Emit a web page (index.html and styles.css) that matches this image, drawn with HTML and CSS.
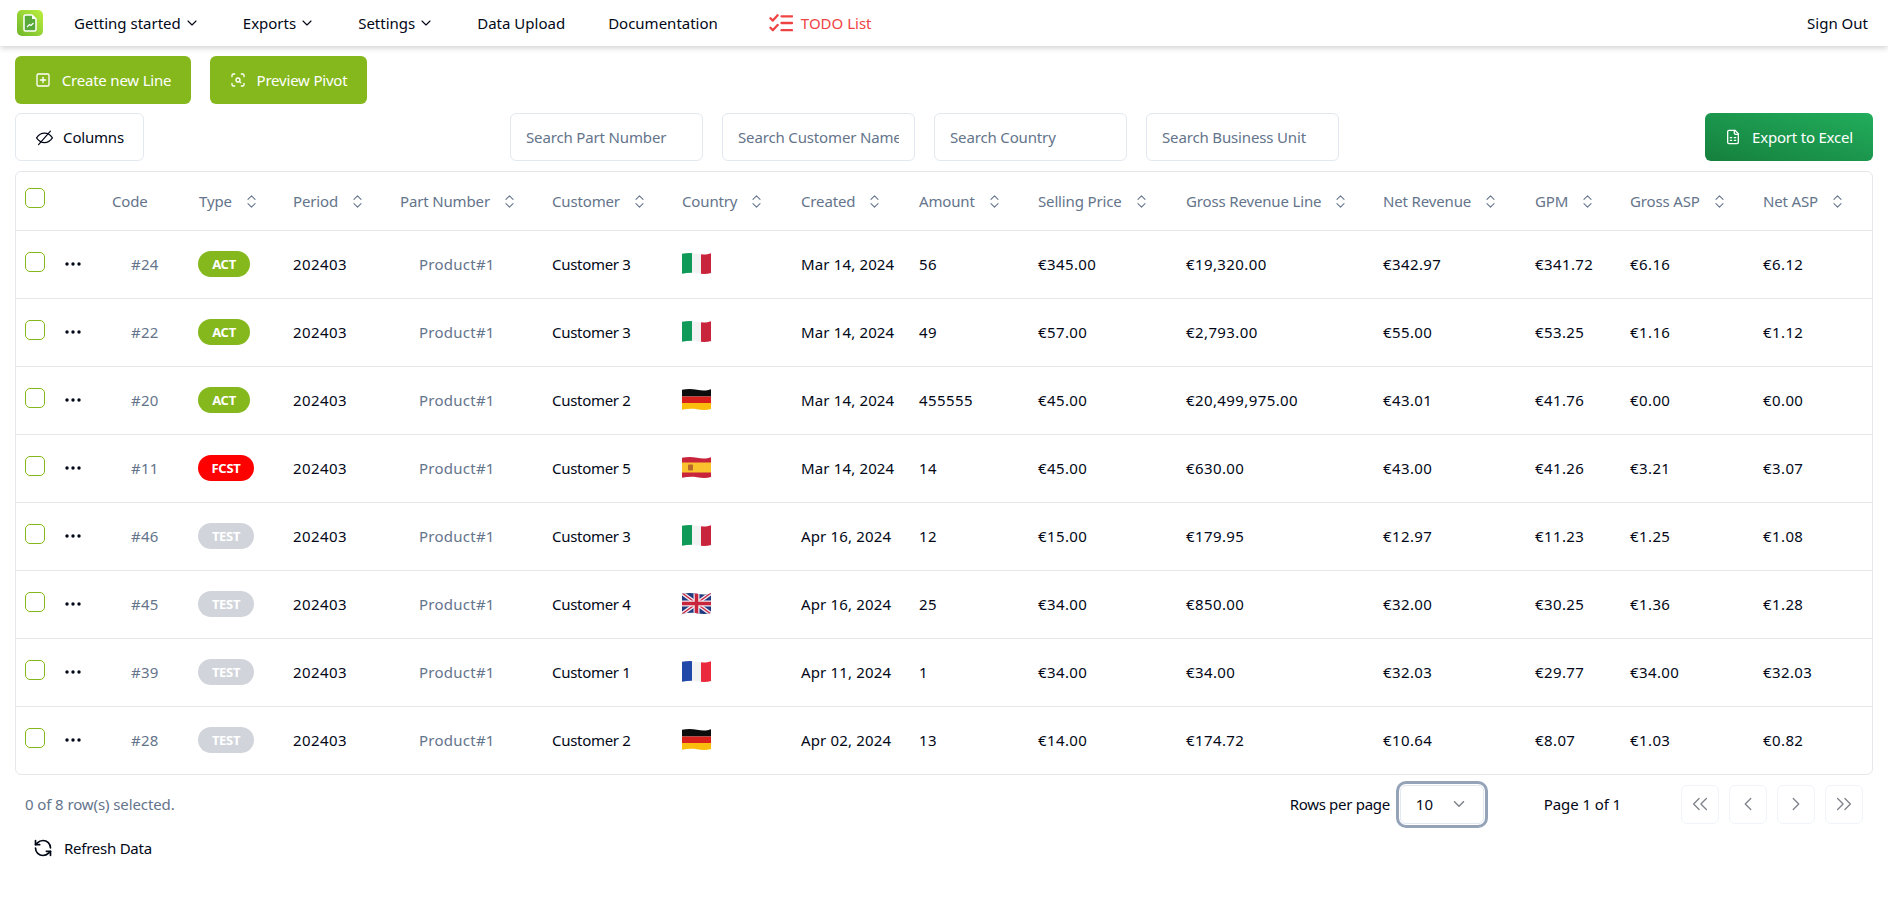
FILE: index.html
```html
<!DOCTYPE html>
<html lang="en">
<head>
    <meta charset="UTF-8">
    <title>Sales Lines</title>
    <link rel="stylesheet" href="styles.css">
</head>
<body>
    <svg class="sprite" width="0" height="0">
        <defs>
            <linearGradient id="logo-grad" x1="1" y1="0" x2="0" y2="1">
                <stop offset="0" stop-color="#bdf03f"/>
                <stop offset="1" stop-color="#6fb62a"/>
            </linearGradient>
            <clipPath id="wave"><path d="M0 .8C5 -.2 10 -.2 15 .8s10 1 14 -.5V20c-4 1.200-9 1.200-14 .2S5 19.800 0 20.800z"/></clipPath>
        </defs>
        <symbol id="i-down" viewBox="0 0 24 24"><path d="m6 9 6 6 6-6"/></symbol>
        <symbol id="i-sort" viewBox="0 0 24 24"><path d="m7 15 5 5 5-5"/><path d="m7 9 5-5 5 5"/></symbol>
        <symbol id="i-plus" viewBox="0 0 24 24"><rect x="3" y="3" width="18" height="18" rx="2"/><path d="M8 12h8"/><path d="M12 8v8"/></symbol>
        <symbol id="i-scan" viewBox="0 0 24 24"><path d="M3 7V5a2 2 0 0 1 2-2h2"/><path d="M17 3h2a2 2 0 0 1 2 2v2"/><path d="M21 17v2a2 2 0 0 1-2 2h-2"/><path d="M7 21H5a2 2 0 0 1-2-2v-2"/><circle cx="12" cy="12" r="3"/><path d="m16 16-1.9-1.9"/></symbol>
        <symbol id="i-eye" viewBox="0 0 24 24"><path d="M2 12.500s4-6 10-6 10 6 10 6-4 6-10 6-10-6-10-6z"/><path d="M4.500 21 19.500 4"/></symbol>
        <symbol id="i-sheet" viewBox="0 0 24 24"><path d="M15 2H6a2 2 0 0 0-2 2v16a2 2 0 0 0 2 2h12a2 2 0 0 0 2-2V7Z"/><path d="M14 2v4a2 2 0 0 0 2 2h4"/><path d="M8 13h2"/><path d="M14 13h2"/><path d="M8 17h2"/><path d="M14 17h2"/></symbol>
        <symbol id="i-todo" viewBox="0 0 25 20"><path d="m1.500 5 2.500 2.500 5-5.500"/><path d="m1.500 15 2.500 2.500 5-5.500"/><path d="M13 3h11"/><path d="M13 10h11"/><path d="M13 17.500h11"/></symbol>
        <symbol id="i-refresh" viewBox="0 0 24 24"><path d="M21 12a9 9 0 0 0-9-9 9.750 9.750 0 0 0-6.740 2.740L3 8"/><path d="M3 3v5h5"/><path d="M3 12a9 9 0 0 0 9 9 9.750 9.750 0 0 0 6.740-2.740L21 16"/><path d="M16 16h5v5"/></symbol>
        <symbol id="i-first" viewBox="0 0 24 24"><path d="m11 18-6-6 6-6"/><path d="m19 18-6-6 6-6"/></symbol>
        <symbol id="i-prev" viewBox="0 0 24 24"><path d="m15 18-6-6 6-6"/></symbol>
        <symbol id="i-next" viewBox="0 0 24 24"><path d="m9 18 6-6-6-6"/></symbol>
        <symbol id="i-last" viewBox="0 0 24 24"><path d="m5 18 6-6-6-6"/><path d="m13 18 6-6-6-6"/></symbol>

        <!-- flags: stripes cut by a waving outline -->
        <symbol id="f-it" viewBox="0 0 29 21"><g clip-path="url(#wave)"><rect width="10" height="21" fill="#109a5a"/><rect x="10" width="9" height="21" fill="#f2f2f2"/><rect x="19" width="10" height="21" fill="#c8243c"/></g></symbol>
        <symbol id="f-fr" viewBox="0 0 29 21"><g clip-path="url(#wave)"><rect width="10" height="21" fill="#1f48a8"/><rect x="10" width="9" height="21" fill="#f2f2f2"/><rect x="19" width="10" height="21" fill="#ea2a3c"/></g></symbol>
        <symbol id="f-de" viewBox="0 0 29 21"><g clip-path="url(#wave)"><rect width="29" height="7.500" fill="#0c0c0c"/><rect y="7.500" width="29" height="6.500" fill="#d8201c"/><rect y="14" width="29" height="7" fill="#fbbe0c"/></g></symbol>
        <symbol id="f-es" viewBox="0 0 29 21"><g clip-path="url(#wave)"><rect width="29" height="21" fill="#c8243c"/><rect y="5.500" width="29" height="10" fill="#fac22c"/><rect x="6" y="7.500" width="5" height="6" rx="1" fill="#b8662a"/></g></symbol>
        <symbol id="f-gb" viewBox="0 0 29 21"><g clip-path="url(#wave)"><rect width="29" height="21" fill="#1f3a80"/><path d="M0 0 29 21M29 0 0 21" stroke="#f2e8ee" stroke-width="4"/><path d="M0 0 29 21M29 0 0 21" stroke="#c8243c" stroke-width="1.300"/><path d="M14.500 0v21M0 10.500h29" stroke="#f2e8ee" stroke-width="6"/><path d="M14.500 0v21M0 10.500h29" stroke="#c8243c" stroke-width="3.500"/></g></symbol>
    </svg>

    <header class="topbar">
        <svg class="logo" viewBox="0 0 26 26">
            <rect width="26" height="26" rx="5" fill="url(#logo-grad)"/>
            <path d="M7 6.500a1.500 1.500 0 0 1 1.500-1.500H15l4 4v10.500a1.500 1.500 0 0 1-1.500 1.500h-9A1.500 1.500 0 0 1 7 19.500z" fill="#58a83a" stroke="#fff" stroke-width="1.500"/>
            <path d="M15 5v4h4z" fill="#fff"/>
            <path d="m10 17 2.500-2.500 1.500 1 2.500-2.500" fill="none" stroke="#fff" stroke-width="1.200"/>
        </svg>
        <nav class="nav">
            <a class="nav-item">Getting started <svg class="ico-down"><use href="#i-down"/></svg></a>
            <a class="nav-item">Exports <svg class="ico-down"><use href="#i-down"/></svg></a>
            <a class="nav-item">Settings <svg class="ico-down"><use href="#i-down"/></svg></a>
            <a class="nav-item">Data Upload</a>
            <a class="nav-item">Documentation</a>
            <a class="nav-item todo"><svg class="ico-todo"><use href="#i-todo"/></svg>TODO List</a>
        </nav>
        <a class="signout">Sign Out</a>
    </header>

    <main class="content">
        <div class="actions">
            <button class="btn btn-green create"><svg class="ico"><use href="#i-plus"/></svg>Create new Line</button>
            <button class="btn btn-green pivot"><svg class="ico"><use href="#i-scan"/></svg>Preview Pivot</button>
        </div>

        <div class="filters">
            <button class="btn btn-outline"><svg class="ico-eye"><use href="#i-eye"/></svg>Columns</button>
            <div class="searches">
                <input class="search" placeholder="Search Part Number">
                <input class="search" placeholder="Search Customer Name">
                <input class="search" placeholder="Search Country">
                <input class="search" placeholder="Search Business Unit">
            </div>
            <button class="btn btn-excel"><svg class="ico"><use href="#i-sheet"/></svg>Export to Excel</button>
        </div>

        <div class="table-wrap">
            <table class="grid">
                <colgroup>
                    <col class="c-sel"><col class="c-act"><col class="c-code"><col class="c-type"><col class="c-period"><col class="c-part"><col class="c-cust"><col class="c-country"><col class="c-created"><col class="c-amount"><col class="c-price"><col class="c-gross"><col class="c-net"><col class="c-gpm"><col class="c-gasp"><col class="c-nasp">
                </colgroup>
                <thead>
                    <tr>
                        <th class="sel"><span class="check"></span></th>
                        <th></th>
                        <th>Code</th>
                        <th>Type<svg class="ico-sort"><use href="#i-sort"/></svg></th>
                        <th>Period<svg class="ico-sort"><use href="#i-sort"/></svg></th>
                        <th>Part Number<svg class="ico-sort"><use href="#i-sort"/></svg></th>
                        <th>Customer<svg class="ico-sort"><use href="#i-sort"/></svg></th>
                        <th>Country<svg class="ico-sort"><use href="#i-sort"/></svg></th>
                        <th>Created<svg class="ico-sort"><use href="#i-sort"/></svg></th>
                        <th>Amount<svg class="ico-sort"><use href="#i-sort"/></svg></th>
                        <th>Selling Price<svg class="ico-sort"><use href="#i-sort"/></svg></th>
                        <th>Gross Revenue Line<svg class="ico-sort"><use href="#i-sort"/></svg></th>
                        <th>Net Revenue<svg class="ico-sort"><use href="#i-sort"/></svg></th>
                        <th>GPM<svg class="ico-sort"><use href="#i-sort"/></svg></th>
                        <th>Gross ASP<svg class="ico-sort"><use href="#i-sort"/></svg></th>
                        <th>Net ASP<svg class="ico-sort"><use href="#i-sort"/></svg></th>
                    </tr>
                </thead>
                <tbody>
                    <tr>
                        <td class="sel"><span class="check"></span></td>
                        <td><svg class="dots" viewBox="0 0 16 4"><circle cx="2" cy="2" r="1.700"/><circle cx="8" cy="2" r="1.700"/><circle cx="14" cy="2" r="1.700"/></svg></td>
                        <td class="code">#24</td>
                        <td><span class="badge act">ACT</span></td>
                        <td class="num">202403</td>
                        <td class="part">Product#1</td>
                        <td class="cust">Customer 3</td>
                        <td><svg class="flag"><use href="#f-it"/></svg></td>
                        <td class="date">Mar 14, 2024</td>
                        <td class="num">56</td>
                        <td class="num">€345.00</td>
                        <td class="num">€19,320.00</td>
                        <td class="num">€342.97</td>
                        <td class="num">€341.72</td>
                        <td class="num">€6.16</td>
                        <td class="num">€6.12</td>
                    </tr>
                    <tr>
                        <td class="sel"><span class="check"></span></td>
                        <td><svg class="dots" viewBox="0 0 16 4"><circle cx="2" cy="2" r="1.700"/><circle cx="8" cy="2" r="1.700"/><circle cx="14" cy="2" r="1.700"/></svg></td>
                        <td class="code">#22</td>
                        <td><span class="badge act">ACT</span></td>
                        <td class="num">202403</td>
                        <td class="part">Product#1</td>
                        <td class="cust">Customer 3</td>
                        <td><svg class="flag"><use href="#f-it"/></svg></td>
                        <td class="date">Mar 14, 2024</td>
                        <td class="num">49</td>
                        <td class="num">€57.00</td>
                        <td class="num">€2,793.00</td>
                        <td class="num">€55.00</td>
                        <td class="num">€53.25</td>
                        <td class="num">€1.16</td>
                        <td class="num">€1.12</td>
                    </tr>
                    <tr>
                        <td class="sel"><span class="check"></span></td>
                        <td><svg class="dots" viewBox="0 0 16 4"><circle cx="2" cy="2" r="1.700"/><circle cx="8" cy="2" r="1.700"/><circle cx="14" cy="2" r="1.700"/></svg></td>
                        <td class="code">#20</td>
                        <td><span class="badge act">ACT</span></td>
                        <td class="num">202403</td>
                        <td class="part">Product#1</td>
                        <td class="cust">Customer 2</td>
                        <td><svg class="flag"><use href="#f-de"/></svg></td>
                        <td class="date">Mar 14, 2024</td>
                        <td class="num">455555</td>
                        <td class="num">€45.00</td>
                        <td class="num">€20,499,975.00</td>
                        <td class="num">€43.01</td>
                        <td class="num">€41.76</td>
                        <td class="num">€0.00</td>
                        <td class="num">€0.00</td>
                    </tr>
                    <tr>
                        <td class="sel"><span class="check"></span></td>
                        <td><svg class="dots" viewBox="0 0 16 4"><circle cx="2" cy="2" r="1.700"/><circle cx="8" cy="2" r="1.700"/><circle cx="14" cy="2" r="1.700"/></svg></td>
                        <td class="code">#11</td>
                        <td><span class="badge fcst">FCST</span></td>
                        <td class="num">202403</td>
                        <td class="part">Product#1</td>
                        <td class="cust">Customer 5</td>
                        <td><svg class="flag"><use href="#f-es"/></svg></td>
                        <td class="date">Mar 14, 2024</td>
                        <td class="num">14</td>
                        <td class="num">€45.00</td>
                        <td class="num">€630.00</td>
                        <td class="num">€43.00</td>
                        <td class="num">€41.26</td>
                        <td class="num">€3.21</td>
                        <td class="num">€3.07</td>
                    </tr>
                    <tr>
                        <td class="sel"><span class="check"></span></td>
                        <td><svg class="dots" viewBox="0 0 16 4"><circle cx="2" cy="2" r="1.700"/><circle cx="8" cy="2" r="1.700"/><circle cx="14" cy="2" r="1.700"/></svg></td>
                        <td class="code">#46</td>
                        <td><span class="badge test">TEST</span></td>
                        <td class="num">202403</td>
                        <td class="part">Product#1</td>
                        <td class="cust">Customer 3</td>
                        <td><svg class="flag"><use href="#f-it"/></svg></td>
                        <td class="date">Apr 16, 2024</td>
                        <td class="num">12</td>
                        <td class="num">€15.00</td>
                        <td class="num">€179.95</td>
                        <td class="num">€12.97</td>
                        <td class="num">€11.23</td>
                        <td class="num">€1.25</td>
                        <td class="num">€1.08</td>
                    </tr>
                    <tr>
                        <td class="sel"><span class="check"></span></td>
                        <td><svg class="dots" viewBox="0 0 16 4"><circle cx="2" cy="2" r="1.700"/><circle cx="8" cy="2" r="1.700"/><circle cx="14" cy="2" r="1.700"/></svg></td>
                        <td class="code">#45</td>
                        <td><span class="badge test">TEST</span></td>
                        <td class="num">202403</td>
                        <td class="part">Product#1</td>
                        <td class="cust">Customer 4</td>
                        <td><svg class="flag"><use href="#f-gb"/></svg></td>
                        <td class="date">Apr 16, 2024</td>
                        <td class="num">25</td>
                        <td class="num">€34.00</td>
                        <td class="num">€850.00</td>
                        <td class="num">€32.00</td>
                        <td class="num">€30.25</td>
                        <td class="num">€1.36</td>
                        <td class="num">€1.28</td>
                    </tr>
                    <tr>
                        <td class="sel"><span class="check"></span></td>
                        <td><svg class="dots" viewBox="0 0 16 4"><circle cx="2" cy="2" r="1.700"/><circle cx="8" cy="2" r="1.700"/><circle cx="14" cy="2" r="1.700"/></svg></td>
                        <td class="code">#39</td>
                        <td><span class="badge test">TEST</span></td>
                        <td class="num">202403</td>
                        <td class="part">Product#1</td>
                        <td class="cust">Customer 1</td>
                        <td><svg class="flag"><use href="#f-fr"/></svg></td>
                        <td class="date">Apr 11, 2024</td>
                        <td class="num">1</td>
                        <td class="num">€34.00</td>
                        <td class="num">€34.00</td>
                        <td class="num">€32.03</td>
                        <td class="num">€29.77</td>
                        <td class="num">€34.00</td>
                        <td class="num">€32.03</td>
                    </tr>
                    <tr>
                        <td class="sel"><span class="check"></span></td>
                        <td><svg class="dots" viewBox="0 0 16 4"><circle cx="2" cy="2" r="1.700"/><circle cx="8" cy="2" r="1.700"/><circle cx="14" cy="2" r="1.700"/></svg></td>
                        <td class="code">#28</td>
                        <td><span class="badge test">TEST</span></td>
                        <td class="num">202403</td>
                        <td class="part">Product#1</td>
                        <td class="cust">Customer 2</td>
                        <td><svg class="flag"><use href="#f-de"/></svg></td>
                        <td class="date">Apr 02, 2024</td>
                        <td class="num">13</td>
                        <td class="num">€14.00</td>
                        <td class="num">€174.72</td>
                        <td class="num">€10.64</td>
                        <td class="num">€8.07</td>
                        <td class="num">€1.03</td>
                        <td class="num">€0.82</td>
                    </tr>
                </tbody>
            </table>
        </div>

        <div class="pager-row">
            <span class="selected">0 of 8 row(s) selected.</span>
            <div class="pager">
                <span class="rows-label">Rows per page</span>
                <div class="rows-select">10<svg class="ico-select"><use href="#i-down"/></svg></div>
                <span class="page-label">Page 1 of 1</span>
                <div class="page-btns">
                    <button class="page-btn"><svg class="ico-page"><use href="#i-first"/></svg></button>
                    <button class="page-btn"><svg class="ico-page"><use href="#i-prev"/></svg></button>
                    <button class="page-btn"><svg class="ico-page"><use href="#i-next"/></svg></button>
                    <button class="page-btn"><svg class="ico-page"><use href="#i-last"/></svg></button>
                </div>
            </div>
        </div>

        <a class="refresh"><svg class="ico-refresh"><use href="#i-refresh"/></svg>Refresh Data</a>
    </main>
</body>
</html>
```

FILE: styles.css
```css
* {
    box-sizing: border-box;
}

body {
    margin: 0;
    font-family: "Noto Sans", sans-serif;
    font-size: 15px;
    color: #020817;
    background: #fff;
}

.sprite {
    position: absolute;
}

svg use {
    fill: none;
    stroke: currentColor;
    stroke-width: 2;
    stroke-linecap: round;
    stroke-linejoin: round;
}

/* top bar */
.topbar {
    display: flex;
    align-items: center;
    height: 46px;
    padding: 0 20px 0 17px;
    box-shadow: 0 2px 6px rgba(0, 0, 0, 0.18);
}

.logo {
    width: 26px;
    height: 26px;
    margin-right: 31px;
}

.nav {
    display: flex;
    align-items: center;
    gap: 43px;
}

.nav-item {
    display: flex;
    align-items: center;
    gap: 3px;
}

.ico-down {
    width: 16px;
    height: 16px;
}

.ico-down use {
    stroke-width: 1.700;
}

.todo {
    color: #ef4444;
    margin-left: 8px;
    gap: 8px;
}

.ico-todo {
    width: 24px;
    height: 20px;
}

.ico-todo use {
    stroke-width: 2.400;
}

.signout {
    margin-left: auto;
}

/* toolbars */
.content {
    padding: 10px 15px 0;
}

.actions {
    display: flex;
    gap: 19px;
}

.btn {
    display: flex;
    align-items: center;
    justify-content: center;
    height: 48px;
    border: none;
    border-radius: 6px;
    font-family: inherit;
    font-size: 15px;
    letter-spacing: -0.2px;
}

.btn-green {
    background: #84b81c;
    color: #fff;
    gap: 11px;
}

.create {
    width: 176px;
}

.pivot {
    width: 157px;
}

.ico {
    width: 16px;
    height: 16px;
}

.filters {
    display: flex;
    justify-content: space-between;
    align-items: center;
    margin-top: 9px;
}

.btn-outline {
    width: 129px;
    gap: 9px;
    background: #fff;
    color: #020817;
    border: 1px solid #e2e8f0;
}

.ico-eye {
    width: 19px;
    height: 19px;
}

.ico-eye use {
    stroke-width: 1.500;
}

.searches {
    display: flex;
    gap: 19px;
}

.search {
    width: 193px;
    height: 48px;
    padding: 0 15px;
    border: 1px solid #e2e8f0;
    border-radius: 6px;
    font-family: inherit;
    font-size: 15px;
    letter-spacing: -0.15px;
}

.search::placeholder {
    color: #64748b;
    opacity: 1;
}

.btn-excel {
    width: 168px;
    gap: 11px;
    color: #fff;
    background: linear-gradient(to top right, #15803d, #22ad5c);
}

/* table */
.table-wrap {
    margin-top: 10px;
    border: 1px solid #e5e7eb;
    border-radius: 6px;
}

.grid {
    width: 100%;
    table-layout: fixed;
    border-collapse: collapse;
}

.c-sel { width: 40px; }
.c-act { width: 48px; }
.c-code { width: 87px; }
.c-type { width: 94px; }
.c-period { width: 107px; }
.c-part { width: 152px; }
.c-cust { width: 130px; }
.c-country { width: 119px; }
.c-created { width: 118px; }
.c-amount { width: 119px; }
.c-price { width: 148px; }
.c-gross { width: 197px; }
.c-net { width: 152px; }
.c-gpm { width: 95px; }
.c-gasp { width: 133px; }
.c-nasp { width: 117px; }

th {
    height: 58px;
    padding: 0 8px;
    font-weight: 400;
    text-align: left;
    color: #64748b;
    white-space: nowrap;
    letter-spacing: -0.15px;
}

td {
    height: 68px;
    padding: 0 8px;
    border-top: 1px solid #e5e7eb;
    white-space: nowrap;
}

.sel {
    padding: 0 0 0 9px;
}

.check {
    display: block;
    width: 20px;
    height: 20px;
    margin-top: -5px;
    border: 1px solid #84b81c;
    border-radius: 5px;
}

.ico-sort {
    width: 17px;
    height: 17px;
    margin-left: 11px;
    vertical-align: -3px;
}

.ico-sort use {
    stroke-width: 1.500;
}

.dots {
    display: block;
    width: 16px;
    height: 4px;
    margin-left: 1px;
    fill: #020817;
}

/* digits run wider in the reference than the font's own advance */
.num {
    letter-spacing: 0.4px;
}

.date {
    letter-spacing: 0.15px;
}

.cust {
    letter-spacing: -0.3px;
}

.code {
    padding-left: 27px;
    color: #64748b;
    letter-spacing: 0.3px;
}

.part {
    padding-left: 27px;
    color: #64748b;
    letter-spacing: 0.25px;
}

.badge {
    display: inline-block;
    width: 56px;
    height: 26px;
    margin-left: -1px;
    border-radius: 13px;
    font-size: 13px;
    font-weight: 700;
    line-height: 26px;
    letter-spacing: -0.3px;
    text-align: center;
    color: #fff;
}

.act {
    width: 52px;
    background: #84b81c;
}

.fcst {
    background: #ff0000;
}

.test {
    background: #d1d5db;
}

.flag {
    display: block;
    width: 29px;
    height: 21px;
    margin-top: -2px;
    filter: blur(0.3px);
}

.flag use {
    stroke: none;
}

/* footer */
.pager-row {
    display: flex;
    align-items: center;
    justify-content: space-between;
    height: 58px;
    padding: 0 10px;
}

.selected {
    color: #64748b;
    letter-spacing: -0.1px;
}

.pager {
    display: flex;
    align-items: center;
}

.rows-label {
    margin-right: 10px;
    letter-spacing: -0.3px;
}

.rows-select {
    display: flex;
    align-items: center;
    justify-content: space-between;
    width: 84px;
    height: 39px;
    padding: 0 15px;
    border: 1px solid #e2e8f0;
    border-radius: 6px;
    outline: 3px solid #94a3b8;
    outline-offset: 1px;
}

.ico-select {
    width: 18px;
    height: 18px;
    opacity: 0.5;
}

.page-label {
    margin-left: 60px;
    letter-spacing: -0.1px;
}

.page-btns {
    display: flex;
    gap: 10px;
    margin-left: 60px;
}

.page-btn {
    display: flex;
    align-items: center;
    justify-content: center;
    width: 38px;
    height: 39px;
    padding: 0;
    border: 1px solid #e2e8f0;
    border-radius: 6px;
    background: #fff;
    color: #020817;
    opacity: 0.5;
}

.ico-page {
    width: 22px;
    height: 22px;
}

.ico-page use {
    stroke-width: 1.400;
}

.refresh {
    display: flex;
    align-items: center;
    gap: 11px;
    margin: 5px 0 0 18px;
    letter-spacing: -0.25px;
}

.ico-refresh {
    width: 20px;
    height: 20px;
}
```
